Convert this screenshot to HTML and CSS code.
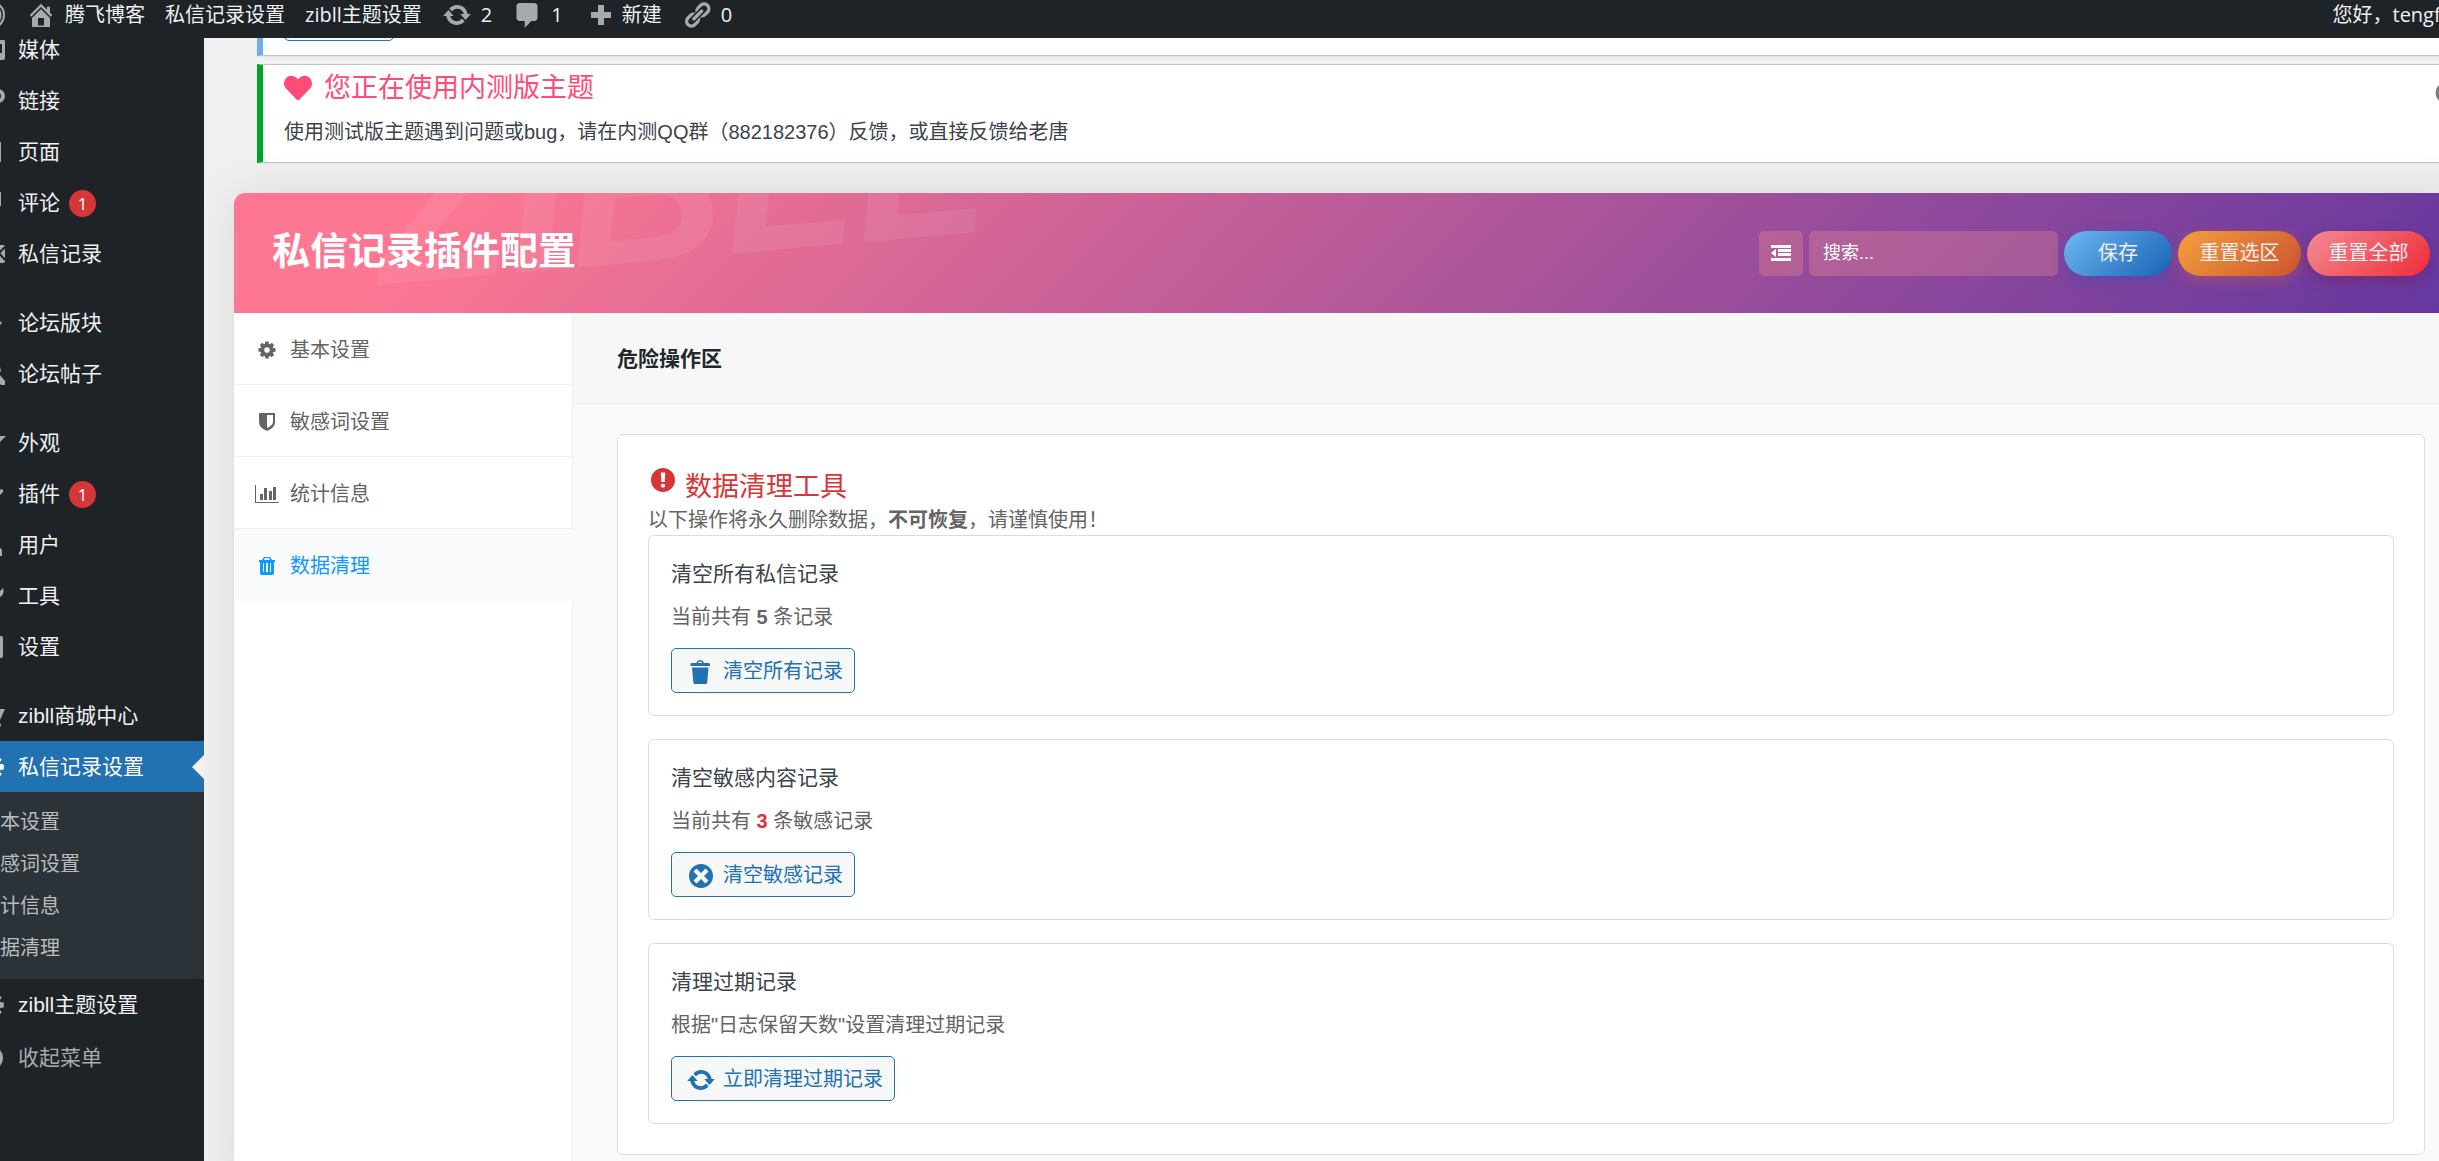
FILE: index.html
```html
<!DOCTYPE html>
<html lang="zh-CN">
<head>
<meta charset="utf-8">
<title>私信记录插件配置</title>
<link rel="stylesheet" href="styles.css">
</head>
<body>
<svg class="sprite" aria-hidden="true">
  <symbol id="i-update" viewBox="0 0 20 20"><path d="M10.2 3.28c3.53 0 6.43 2.61 6.92 6h2.08l-3.5 4-3.5-4h2.32c-.45-1.97-2.21-3.45-4.32-3.45-1.45 0-2.73.71-3.54 1.78L4.95 5.66C6.23 4.2 8.11 3.28 10.2 3.28zm-.4 13.44c-3.52 0-6.43-2.61-6.92-6H.8l3.5-4c1.17 1.33 2.33 2.67 3.5 4H5.48c.45 1.97 2.21 3.45 4.32 3.45 1.45 0 2.73-.71 3.54-1.78l1.71 1.95c-1.28 1.46-3.15 2.38-5.25 2.38z"/></symbol>
  <symbol id="i-trash" viewBox="0 0 20 20"><path d="M12 4h3c.6 0 1 .4 1 1v1H3V5c0-.6.5-1 1-1h3c.2-1.1 1.3-2 2.5-2s2.3.9 2.5 2zM8 4h3c-.2-.6-.9-1-1.5-1S8.200 3.400 8 4zM4 7h11l-.9 10.100c0 .5-.5.9-1 .9H5.900c-.5 0-.9-.4-1-.9L4 7z"/></symbol>
  <symbol id="i-warning" viewBox="0 0 20 20"><path d="M10 2c4.42 0 8 3.580 8 8s-3.580 8-8 8-8-3.580-8-8 3.580-8 8-8zm1.130 9.380l.35-6.460H8.520l.35 6.460h2.260zm-.09 3.360c.24-.23.37-.55.37-.96 0-.42-.12-.74-.36-.97s-.59-.35-1.060-.35-.82.12-1.070.35-.37.55-.37.97c0 .41.13.73.38.96.26.23.61.34 1.060.34s.8-.11 1.050-.34z"/></symbol>
  <symbol id="i-dismiss" viewBox="0 0 20 20"><path d="M10 2c4.420 0 8 3.580 8 8s-3.580 8-8 8-8-3.580-8-8 3.580-8 8-8zm5 11l-3-3 3-3-2-2-3 3-3-3-2 2 3 3-3 3 2 2 3-3 3 3z"/></symbol>
  <symbol id="i-gear" viewBox="0 0 1536 1792"><path d="M1024 896q0-106-75-181t-181-75-181 75-75 181 75 181 181 75 181-75 75-181zm512-109v222q0 12-8 23t-20 13l-185 28q-19 54-39 91 35 50 107 138 10 12 10 25t-9 23q-27 37-99 108t-94 71q-12 0-26-9l-138-108q-44 23-91 38-16 136-29 186-7 28-36 28H657q-14 0-24.500-8.500T621 1632l-28-184q-49-16-90-37l-141 107q-10 9-25 9-14 0-25-11-126-114-165-168-7-10-7-23 0-12 8-23 15-21 51-66.500t54-70.500q-27-50-41-99L29 1038q-13-2-21-12.500T0 1002V780q0-12 8-23t19-13l186-28q14-46 39-92-40-57-107-138-10-12-10-24 0-10 9-23 26-36 98.500-107.500T337 260q13 0 26 10l138 107q44-23 91-38 16-136 29-186 7-28 36-28h222q14 0 24.500 8.500T915 155l28 184q49 16 90 37l142-107q9-9 24-9 13 0 25 10 129 119 165 170 7 8 7 22 0 12-8 23-15 21-51 66.500t-54 70.500q26 50 41 98l183 28q13 2 21 12.500t8 23.500z"/></symbol>
</svg>

<div class="page">
  <header class="adminbar">
    <nav class="adminbar-links" aria-label="工具栏">
      <a href="#" class="bar-item bar-logo" aria-label="WordPress"><svg viewBox="0 0 30 30"><circle cx="15" cy="15" r="13" fill="none" stroke="currentColor" stroke-width="2"/><circle cx="15" cy="15" r="10.500"/></svg></a>
      <a href="#" class="bar-item"><svg viewBox="0 0 20 20"><path d="M16 8.500l1.530 1.530-1.060 1.060L10 4.600l-6.470 6.490-1.060-1.060L10 2.500l4 4v-2h2v4zm-6-2.460l6 5.990V18H4v-5.970zM12 17v-5H8v5h4z"/></svg>腾飞博客</a>
      <a href="#" class="bar-item">私信记录设置</a>
      <a href="#" class="bar-item">zibll主题设置</a>
      <a href="#" class="bar-item"><svg><use href="#i-update"/></svg>2</a>
      <a href="#" class="bar-item"><svg viewBox="0 0 20 20"><path d="M5 2h10c1.100 0 2 .9 2 2v8c0 1.100-.9 2-2 2h-2l-4.500 4.500V14H5c-1.100 0-2-.9-2-2V4c0-1.100.9-2 2-2z"/></svg>1</a>
      <a href="#" class="bar-item"><svg viewBox="0 0 30 30"><path d="M15 5h6v7h7v6h-7v7h-6v-7H8v-6h7z"/></svg>新建</a>
      <a href="#" class="bar-item"><svg viewBox="0 0 20 20"><path d="M17.740 2.760c1.680 1.690 1.680 4.410 0 6.100l-1.530 1.520c-1.120 1.120-2.700 1.470-4.140 1.090l2.620-2.610.76-.77.76-.76c.84-.84.84-2.200 0-3.040-.84-.85-2.200-.85-3.040 0l-.77.76-3.380 3.380c-.37-1.440-.02-3.020 1.100-4.140l1.520-1.530c1.690-1.680 4.420-1.680 6.100 0zM8.590 13.430l5.340-5.340c.42-.42.42-1.100 0-1.520-.44-.43-1.130-.39-1.530 0l-5.330 5.340c-.42.42-.42 1.100 0 1.520.44.43 1.130.39 1.520 0zm-.76 2.290l4.140-4.150c.38 1.440.03 3.020-1.090 4.140l-1.520 1.530c-1.690 1.680-4.410 1.680-6.100 0-1.680-1.680-1.680-4.420 0-6.100l1.530-1.520c1.120-1.120 2.700-1.470 4.140-1.100l-4.140 4.150c-.85.84-.85 2.200 0 3.050.84.84 2.200.84 3.040 0z"/></svg>0</a>
    </nav>
    <a href="#" class="bar-item">您好，tengfei</a>
  </header>

  <div class="shell">
    <nav class="sidebar" aria-label="主菜单">
      <ul class="menu">
        <li><a href="#"><svg viewBox="0 0 30 30"><path d="M8 5h20q1 0 1 1v17q0 2-2 2H8z"/><path d="M22 9h4v9h-4z" fill="#1d2327"/></svg>媒体</a></li>
        <li><a href="#"><svg viewBox="0 0 30 30"><circle cx="22" cy="10" r="5" fill="none" stroke="currentColor" stroke-width="4"/></svg>链接</a></li>
        <li><a href="#"><svg viewBox="0 0 30 30"><path d="M6 5h19v20H6z"/></svg>页面</a></li>
        <li><a href="#"><svg viewBox="0 0 30 30"><path d="M6 4h19v14H12l-4 5z"/></svg>评论<span class="count">1</span></a></li>
        <li><a href="#"><svg viewBox="0 0 30 30"><path d="M2 6h25q2 0 2 2v14q0 2-2 2H2z"/><path d="M29 8l-6 6 6 7" fill="none" stroke="#1d2327" stroke-width="2"/></svg>私信记录</a></li>
        <li class="group"><a href="#"><svg viewBox="0 0 30 30"><path d="M18 13h6l2 2-2 2h-6z"/></svg>论坛版块</a></li>
        <li><a href="#"><svg viewBox="0 0 30 30"><path d="M20 8h4l1 4-2 3 6 7v4h-4l-7-8z"/></svg>论坛帖子</a></li>
        <li class="group"><a href="#"><svg viewBox="0 0 30 30"><path d="M16 8h14l-9 9z"/></svg>外观</a></li>
        <li><a href="#"><svg viewBox="0 0 30 30"><path d="M14 8l7 6 4-4q3 0 2 3l-7 7z"/></svg>插件<span class="count">1</span></a></li>
        <li><a href="#"><svg viewBox="0 0 30 30"><path d="M8 26v-8q12-6 18 2v6z"/></svg>用户</a></li>
        <li><a href="#"><svg viewBox="0 0 30 30"><path d="M16 13l4-4 2 3 5-5q2 6-3 9l-8 4z"/></svg>工具</a></li>
        <li><a href="#"><svg viewBox="0 0 30 30"><path d="M8 4h17q2 0 2 2v18q0 2-2 2H8z"/></svg>设置</a></li>
        <li class="group"><a href="#"><svg viewBox="0 0 30 30"><path d="M4 8h25l-5 11H8z"/><circle cx="23" cy="24" r="2"/></svg>zibll商城中心</a></li>
        <li class="current">
          <a href="#"><svg><use href="#i-gear"/></svg>私信记录设置</a>
          <ul class="submenu">
            <li><a href="#">基本设置</a></li>
            <li><a href="#">敏感词设置</a></li>
            <li><a href="#">统计信息</a></li>
            <li><a href="#">数据清理</a></li>
          </ul>
        </li>
        <li><a href="#"><svg><use href="#i-gear"/></svg>zibll主题设置</a></li>
      </ul>
      <button type="button" class="collapse"><svg viewBox="0 0 30 30"><circle cx="15" cy="15" r="12"/></svg>收起菜单</button>
    </nav>

    <main class="main">
      <section class="notice notice-info"><button type="button" class="btn-outline notice-btn" aria-label="查看详情"></button></section>
      <section class="notice notice-success">
        <div>
          <h3 class="notice-title"><svg viewBox="0 0 512 512"><path d="M462.300 62.600C407.500 15.900 326 24.300 275.700 76.200L256 96.500l-19.700-20.300C186.100 24.300 104.500 15.900 49.700 62.600c-62.800 53.600-66.100 149.800-9.900 207.900l193.500 199.800c12.500 12.900 32.800 12.900 45.300 0l193.500-199.800c56.300-58.100 53-154.300-9.800-207.900z"/></svg>您正在使用内测版主题</h3>
          <p class="notice-text">使用测试版主题遇到问题或bug，请在内测QQ群（882182376）反馈，或直接反馈给老唐</p>
        </div>
        <button type="button" class="notice-close" aria-label="忽略此通知"><svg><use href="#i-dismiss"/></svg></button>
      </section>

      <div class="panel">
        <div class="panel-head">
          <span class="watermark" aria-hidden="true">ZIBLL</span>
          <h1 class="panel-title">私信记录插件配置</h1>
          <form class="panel-tools">
            <button type="button" class="expand" aria-label="展开全部"><svg viewBox="0 0 20 16"><path d="M0 0h20v3H0zM7 4h13v3H7zM7 8h13v3H7zM0 13h20v3H0zM5 4v8L0 8z"/></svg></button>
            <input type="search" class="search" placeholder="搜索..." aria-label="搜索">
            <button type="button" class="pill pill-save">保存</button>
            <button type="button" class="pill pill-section">重置选区</button>
            <button type="button" class="pill pill-all">重置全部</button>
          </form>
        </div>

        <div class="panel-body">
          <nav class="tabs" aria-label="配置分区">
            <a href="#" class="tab"><svg><use href="#i-gear"/></svg>基本设置</a>
            <a href="#" class="tab"><svg viewBox="0 0 24 20"><path fill-rule="evenodd" d="M4 1h16v9q0 6-8 9-8-3-8-9zM12 3v13q6-3 6-6V3z"/></svg>敏感词设置</a>
            <a href="#" class="tab"><svg viewBox="0 0 24 20"><path d="M0 1h1v17h23v1H0zM5 10h3v6H5zM9 4h3v12H9zM14 7h3v9h-3zM18 3h3v13h-3z"/></svg>统计信息</a>
            <a href="#" class="tab tab-active"><svg viewBox="0 0 24 20"><path fill-rule="evenodd" d="M9 1h6l2 3h3v2h-1v11q0 2-2 2H7q-2 0-2-2V6H4V4h3zM10 2L9 4h6l-1-2zM8 7v9h1V7zM11 7v9h2V7zM15 7v9h1V7z"/></svg>数据清理</a>
          </nav>

          <div class="content">
            <h2 class="content-title">危险操作区</h2>
            <section class="tool-box">
              <h3 class="tool-title"><svg><use href="#i-warning"/></svg>数据清理工具</h3>
              <p class="desc tool-desc">以下操作将永久删除数据，<strong>不可恢复</strong>，请谨慎使用！</p>
              <div class="cards">
                <article class="card">
                  <h4>清空所有私信记录</h4>
                  <p class="desc">当前共有 <strong>5</strong> 条记录</p>
                  <button type="button" class="btn-outline"><svg><use href="#i-trash"/></svg>清空所有记录</button>
                </article>
                <article class="card">
                  <h4>清空敏感内容记录</h4>
                  <p class="desc">当前共有 <strong class="alert">3</strong> 条敏感记录</p>
                  <button type="button" class="btn-outline"><svg><use href="#i-dismiss"/></svg>清空敏感记录</button>
                </article>
                <article class="card">
                  <h4>清理过期记录</h4>
                  <p class="desc">根据"日志保留天数"设置清理过期记录</p>
                  <button type="button" class="btn-outline"><svg><use href="#i-update"/></svg>立即清理过期记录</button>
                </article>
              </div>
            </section>
          </div>
        </div>
      </div>
    </main>
  </div>
</div>
</body>
</html>
```
FILE: styles.css
```css
:root {
  --dark: #1d2327;
  --blue: #2271b1;
  --red: #d63638;
  --line: #dcdcde;
  --ui: "Open Sans", "Noto Sans CJK SC", sans-serif;
  --text: "Liberation Sans", "Noto Sans CJK SC", sans-serif;
}

* { box-sizing: border-box; }

body {
  margin: 0;
  overflow: hidden;
  background: #f0f0f1;
  color: #3c434a;
  font: 20px/30px var(--text);
}

h1, h2, h3, h4, p, ul { margin: 0; padding: 0; font-weight: 400; }
ul { list-style: none; }
a { color: inherit; text-decoration: none; }
svg { display: block; flex: none; fill: currentColor; }
button, input { font: inherit; color: inherit; }
button { cursor: pointer; }
.sprite { display: none; }

/* The wide admin layout runs past both window edges */
.page {
  display: flex;
  flex-direction: column;
  height: 100vh;
  margin: 0 -37px 0 -36px;
  overflow: hidden;
}

/* Admin bar */
.adminbar {
  position: relative;
  z-index: 2;
  flex: none;
  display: flex;
  justify-content: space-between;
  height: 48px;
  margin-top: -10px;
  padding: 2px 19px 0 12px;
  background: var(--dark);
  color: #f0f0f1;
  font-family: var(--ui);
}
.adminbar-links { display: flex; gap: 20px; }
.bar-item { display: flex; align-items: center; gap: 9px; white-space: nowrap; }
.bar-item svg { width: 30px; height: 30px; color: #a7aaad; }

.shell { flex: 1; display: flex; min-height: 0; }

/* Sidebar */
.sidebar {
  flex: none;
  width: 240px;
  margin-top: -14px;
  background: var(--dark);
  color: #f0f0f1;
  font-size: 21px;
}
.menu > li > a, .collapse {
  display: flex;
  align-items: center;
  height: 51px;
  padding-left: 12px;
}
.menu svg, .collapse svg {
  width: 30px;
  height: 30px;
  margin-right: 12px;
  color: #a7aaad;
}
.menu .group { margin-top: 18px; }
.count {
  width: 27px;
  height: 27px;
  margin: 2px 0 0 9px;
  border-radius: 50%;
  background: var(--red);
  color: #fff;
  font: 17px/27px var(--ui);
  text-align: center;
}
.menu .current > a {
  position: relative;
  background: var(--blue);
  color: #fff;
}
.menu .current > a svg { color: #fff; }
.current > a::after {
  content: "";
  position: absolute;
  right: 0;
  top: 50%;
  margin-top: -12px;
  border: 12px solid transparent;
  border-left: 0;
  border-right-color: #f0f0f1;
}
.submenu {
  padding: 9px 0 10px;
  background: #2c3338;
  color: #b9bcbf;
  font-size: 20px;
}
.submenu a { display: block; padding-left: 16px; line-height: 42px; }
.collapse {
  margin-top: 2px;
  border: 0;
  background: none;
  color: #a7aaad;
}

/* Main column */
.main { flex: 1; min-width: 0; padding: 0 6px 0 30px; }

.notice {
  display: flex;
  justify-content: space-between;
  margin-left: 23px;
  border: 1px solid #c3c4c7;
  border-left: 6px solid #72aee6;
  background: #fff;
  box-shadow: 0 1px 2px rgba(0, 0, 0, .05);
}
.notice-info { margin-top: -51px; padding: 8px 21px 14px; }
.notice-btn { width: 110px; }
.notice-success {
  margin-top: 8px;
  padding: 3px 0 15px 21px;
  border-left-color: #00a32a;
}
.notice-title {
  display: flex;
  align-items: center;
  gap: 12px;
  color: #ff4b78;
  font-size: 27px;
  line-height: 40px;
}
.notice-title svg { width: 28px; height: 28px; }
.notice-text { margin-top: 10px; line-height: 29px; }
.notice-close {
  align-self: flex-start;
  padding: 12px 10px;
  border: 0;
  background: none;
  color: #787c82;
}
.notice-close svg { width: 26px; height: 26px; }

/* Settings panel */
.panel {
  margin-top: 30px;
  border-radius: 11px;
  background: #fff;
  box-shadow: 0 0 45px rgba(0, 0, 0, .1);
}
.panel-head {
  position: relative;
  display: flex;
  align-items: center;
  justify-content: space-between;
  height: 120px;
  padding: 0 40px 0 38px;
  overflow: hidden;
  border-radius: 11px 11px 0 0;
  background: linear-gradient(135deg, #fd7793 10%, #6236a0);
  color: #fff;
}
.watermark {
  position: absolute;
  left: 140px;
  top: -130px;
  color: rgba(255, 255, 255, .07);
  font: italic 700 216px/240px var(--text);
  transform: rotate(-5deg);
}
.panel-title {
  position: relative;
  padding-bottom: 4px;
  font-size: 38px;
  font-weight: 700;
  line-height: 56px;
}
.panel-tools { position: relative; display: flex; gap: 6px; }
.expand, .search, .pill { height: 45px; border: 0; }
.expand, .search { border-radius: 5px; background: rgba(247, 147, 147, .3); }
.expand {
  display: grid;
  place-items: center;
  width: 44px;
  padding: 0;
}
.expand svg { width: 20px; height: 16px; }
.search { width: 249px; padding: 0 14px; font-size: 18px; outline: 0; }
.search::placeholder { color: #fff; opacity: 1; }
.pill { width: 123px; padding: 0; border-radius: 23px; color: #f5eef5; }
.pill-save {
  width: 108px;
  background: linear-gradient(135deg, #6fb8f4, #1862b3);
  box-shadow: 0 5px 14px rgba(30, 90, 180, .35);
}
.pill-section {
  background: linear-gradient(135deg, #f3a03d, #cd542f);
  box-shadow: 0 5px 14px rgba(220, 100, 60, .35);
}
.pill-all {
  background: linear-gradient(135deg, #f38b93, #ee2c36);
  box-shadow: 0 5px 14px rgba(120, 20, 60, .35);
}

.panel-body { display: flex; }
.tabs {
  flex: none;
  width: 339px;
  border-right: 1px solid #eee;
  color: #646464;
}
.tab {
  display: flex;
  align-items: center;
  gap: 11px;
  height: 72px;
  padding: 2px 0 0 21px;
  border-bottom: 1px solid #f0f0f0;
}
.tab svg { width: 24px; height: 20px; }
.tab-active {
  margin-right: -1px;
  border-bottom-color: #f9fafc;
  background: #f9fafc;
  color: #0d99ff;
}

.content { flex: 1; min-width: 0; background: #f9fafc; }
.content-title {
  padding: 31px 44px 29px;
  border-bottom: 1px solid #eee;
  background: #f7f7f7;
  color: #23282d;
  font-size: 21px;
  font-weight: 700;
}
.tool-box {
  margin: 30px 45px 30px 44px;
  padding: 30px;
  border: 1px solid var(--line);
  border-radius: 6px;
  background: #fff;
}
.tool-title {
  display: flex;
  gap: 7px;
  color: var(--red);
  font-size: 27px;
  line-height: 44px;
}
.tool-title svg { width: 30px; height: 30px; }
.desc { color: #646464; }
.tool-desc { padding-bottom: 4px; line-height: 22px; }
.cards { display: grid; gap: 23px; }
.card {
  display: flex;
  flex-direction: column;
  align-items: flex-start;
  padding: 22px;
  border: 1px solid var(--line);
  border-radius: 6px;
}
.card h4 { font-size: 21px; line-height: 32px; }
.card .desc { margin: 12px 0 16px; }
.alert { color: var(--red); }
.btn-outline {
  display: flex;
  align-items: center;
  gap: 7px;
  height: 45px;
  padding: 0 11px 0 14px;
  border: 1px solid var(--blue);
  border-radius: 5px;
  background: #f6f7f7;
  color: var(--blue);
}
.btn-outline svg { width: 30px; height: 30px; margin-top: 3px; }
```
